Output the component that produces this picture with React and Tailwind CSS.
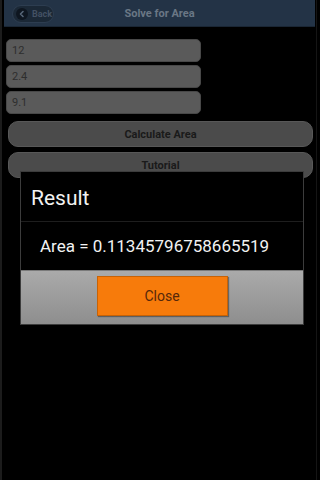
export default function App() {
  const font = { fontFamily: 'Roboto, "Noto Sans", sans-serif' };
  return (
    <div className="relative w-[320px] h-[480px] bg-black overflow-hidden" style={font}>
      <div className="absolute left-0 top-0 h-full w-[2px] bg-[#1c1c1c]" />
      <div className="absolute left-[316px] top-0 h-full w-[1px] bg-[#151515]" />
      <div className="flex flex-col">
        <div className="mx-[4px] w-[311px] h-[27px] bg-[#233346] border-b border-[#1a2634] relative flex items-center justify-center">
          <div className="absolute left-[8px] top-[5px] h-[18px] w-[42px] rounded-full bg-[#1b2836] border border-[#2d3d50] flex items-center pl-[3px] gap-[4px]">
            <div className="w-[12px] h-[12px] rounded-full bg-[#0e1620] flex items-center justify-center">
              <svg width="8" height="8" viewBox="0 0 8 8">
                <path d="M5 1.5 L2.5 4 L5 6.5" stroke="#566678" strokeWidth="1.6" fill="none" strokeLinecap="round" strokeLinejoin="round" />
              </svg>
            </div>
            <span className="text-[9px] font-bold text-[#435163] leading-none">Back</span>
          </div>
          <span className="text-[11px] font-bold text-[#6a7785] leading-none">Solve for Area</span>
        </div>

        <div className="mt-[12px] ml-[6px] flex flex-col gap-[3px]">
          {["12", "2.4", "9.1"].map((v) => (
            <div key={v} className="w-[195px] h-[23px] rounded-[5px] bg-[#5a5a5a] border border-[#484848] flex items-center pl-[5px]">
              <span className="text-[11px] text-[#2e2e2e] leading-none">{v}</span>
            </div>
          ))}
        </div>

        <div className="mt-[7px] ml-[8px] flex flex-col gap-[5px]">
          {["Calculate Area", "Tutorial"].map((t) => (
            <div key={t} className="w-[305px] h-[26px] rounded-[10px] bg-[#4b4b4b] border border-[#585858] flex items-center justify-center">
              <span className="text-[11px] font-bold text-[#1a1a1a] leading-none">{t}</span>
            </div>
          ))}
        </div>
      </div>

      <div className="absolute left-[20px] top-[171px] w-[284px] h-[154px] border border-[#3c3c3c] flex flex-col">
        <div className="h-[50px] bg-black flex items-center pl-[10px] border-b border-[#1e1e1e]">
          <span className="text-[21px] text-[#f2f2f2] leading-none pt-[4px]">Result</span>
        </div>
        <div className="h-[48px] bg-black flex items-center pl-[19px]">
          <span className="text-[17px] text-[#f2f2f2] leading-none">Area = 0.11345796758665519</span>
        </div>
        <div className="flex-1 bg-gradient-to-b from-[#aaaaaa] to-[#8e8e8e] border-t border-[#7a7a7a] flex justify-center pt-[5px]">
          <div className="w-[131px] h-[40px] bg-[#f77b0b] border border-[#c86205] shadow-[1px_1px_1px_rgba(0,0,0,0.35)] flex items-center justify-center">
            <span className="text-[14px] text-[#55280a] leading-none">Close</span>
          </div>
        </div>
      </div>
    </div>
  );
}
